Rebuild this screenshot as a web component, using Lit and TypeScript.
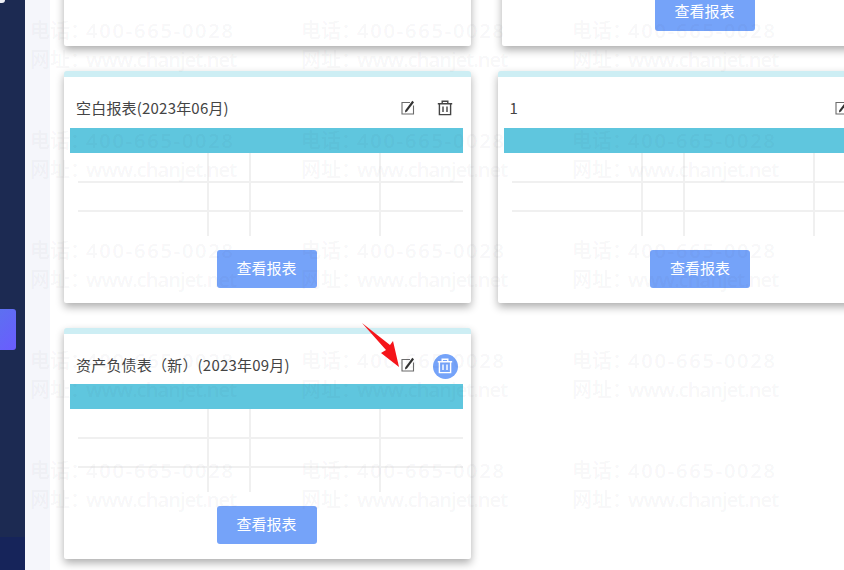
import { LitElement, html, css, svg } from "lit";
import { customElement } from "lit/decorators.js";

const editIcon = html`<svg class="ic" viewBox="0 0 14 15" width="14" height="15"><path d="M9 2.5H1V14H12.5V5.5" fill="none" stroke="#6b6b6b" stroke-width="1.1"/><path d="M11.3 .8L13 2.2L6 11.6L4 12.6L4.3 10.3Z" fill="#333"/></svg>`;
const trashIcon = (c: string) => svg`<path d="M.8 3.7H15.2M5.2 3.7V1.2H10.8V3.7M2.4 3.7V14.6H13.6V3.7M6 6.5V12M10 6.5V12" fill="none" stroke="${c}" stroke-width="1.4"/>`;

@customElement("app-root")
export class AppRoot extends LitElement {
  static styles = css`
    :host { display: block; width: 844px; height: 570px; overflow: hidden; position: relative; background: #fff; font-family: "Noto Sans CJK SC", "Liberation Sans", sans-serif; }
    .page { display: flex; height: 570px; overflow: hidden; }
    .side { width: 25px; flex: none; background: #1c2a52; display: flex; flex-direction: column; }
    .corner { width: 5px; height: 3px; background: #eef0f6; border-radius: 0 0 3px 0; }
    .active { width: 16px; height: 41px; margin-top: 306px; background: linear-gradient(135deg, #5d70f0, #6a5cff); border-radius: 0 3px 3px 0; }
    .side-foot { margin-top: auto; height: 33px; background: #16245a; }
    .gutter { width: 25px; flex: none; background: #f5f6fb; }
    .content { flex: 1; min-width: 0; overflow: hidden; padding: 0 0 0 14px; }
    .grid { display: grid; grid-template-columns: repeat(2, 407px); column-gap: 26.5px; row-gap: 25px; margin-top: -186px; width: 841px; align-items: start; }
    .card { width: 407px; height: 232px; box-sizing: border-box; background: #fff; border-top: 6px solid #cdeef4; border-radius: 3px 3px 2px 2px; box-shadow: 0 4px 8px rgba(0,0,0,.32); padding: 0 8px 0 6px; display: flex; flex-direction: column; }
    .card.shift { margin-left: 4.5px; }
    .card.compact { height: 231px; }
    .head { height: 51px; box-sizing: border-box; padding: 10px 0 0 6px; flex: none; display: flex; align-items: center; font-size: 15px; letter-spacing: .2px; color: #444; }
    .compact .head { height: 50px; }
    .title { flex: 1; white-space: nowrap; }
    .ic { display: block; }
    .icons { display: flex; align-items: center; gap: 18px; padding-right: 5px; }
    .icon { width: 25px; height: 25px; display: flex; align-items: center; justify-content: center; border-radius: 50%; padding-right: 1px; box-sizing: border-box; }
    .icon.on { background: #75a3f9; transform: translateY(2px); }
    .band { height: 25px; background: #5fc6de; flex: none; }
    .table { height: 83px; flex: none; }
    .table svg { display: block; }
    .btn-row { flex: none; display: flex; justify-content: center; margin-top: 14px; height: 38px; }
    .btn { width: 100px; height: 38px; box-sizing: border-box; padding-bottom: 3px; border-radius: 3px; background: #75a3f9; color: #fff; font-size: 15px; display: flex; align-items: center; justify-content: center; }
    .wm { position: absolute; left: 30px; top: 16px; display: grid; grid-template-columns: repeat(3, 271px); grid-auto-rows: 110px; pointer-events: none; color: rgba(60,60,80,.055); font-size: 20px; white-space: nowrap; font-family: "Open Sans", "Noto Sans CJK SC", sans-serif; font-weight: 500; }
    .wm div { line-height: 29px; }
    .num { letter-spacing: 1.8px; margin-left: -4px; font-weight: 600; }
    .url { letter-spacing: -.92px; margin-left: -4px; font-weight: 600; }
    .arrow { position: absolute; left: 360px; top: 320px; pointer-events: none; }
  `;

  card(title: string, opts: { active?: boolean; btn?: boolean; shift?: boolean } = {}) {
    const { active = false, btn = true, shift = false } = opts;
    return html`<div class="card ${shift ? "shift" : ""} ${active ? "compact" : ""}">
      <div class="head"><span class="title">${title}</span>
        ${title === "" ? "" : html`<div class="icons">${editIcon}
          <span class="icon ${active ? "on" : ""}"><svg class="ic" viewBox="0 0 16 16" width="16" height="16">${trashIcon(active ? "#fff" : "#444")}</svg></span></div>`}
      </div>
      <div class="band"></div>
      <div class="table"><svg width="393" height="83" viewBox="0 0 393 83">
        <path d="M8 29H393M8 58H393M138 0V83M180 0V83M310 0V83" stroke="#f0f0f0" stroke-width="2" fill="none"/></svg></div>
      <div class="btn-row">${btn ? html`<div class="btn">查看报表</div>` : ""}</div>
    </div>`;
  }

  render() {
    const marks = Array.from({ length: 15 });
    return html`<div class="page">
      <div class="side"><div class="corner"></div><div class="active"></div><div class="side-foot"></div></div>
      <div class="gutter"></div>
      <div class="content"><div class="grid">
        ${this.card("", { btn: false })}${this.card("", { shift: true })}
        ${this.card("空白报表(2023年06月)")}${this.card("1")}
        ${this.card("资产负债表（新）(2023年09月)", { active: true })}
      </div></div>
    </div>
    <div class="wm">${marks.map(() => html`<div>电话：<span class="num">400-665-0028</span><br />网址：<span class="url">www.chanjet.net</span></div>`)}</div>
    <svg class="arrow" width="44" height="50" viewBox="360 320 44 50"><path d="M362 323L390 345L393 341L399 367L381 353L386 350Z" fill="#f5151a"/></svg>`;
  }
}
